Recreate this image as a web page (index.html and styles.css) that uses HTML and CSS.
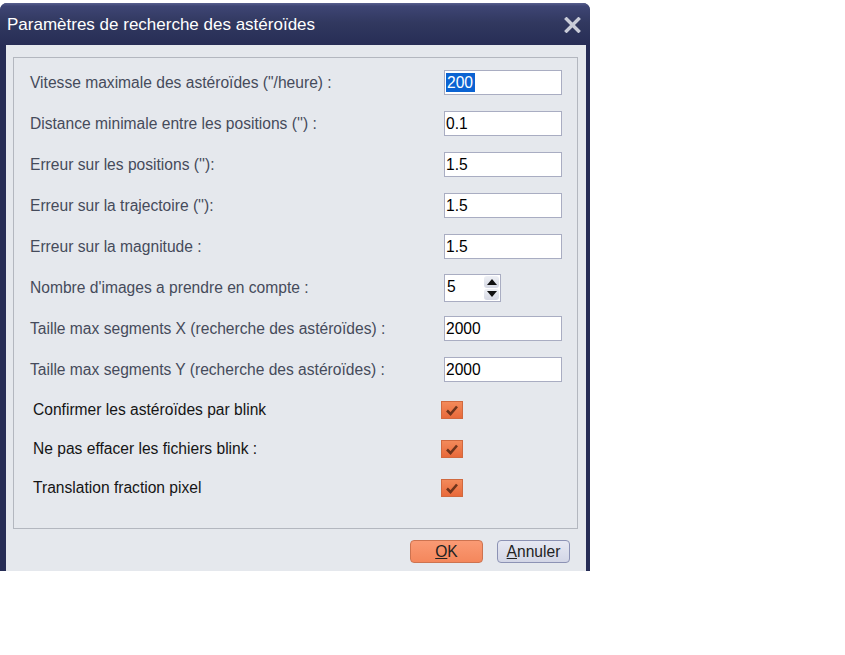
FILE: index.html
```html
<!DOCTYPE html>
<html lang="fr">
<head>
    <meta charset="UTF-8">
    <title>Paramètres de recherche des astéroïdes</title>
    <link rel="stylesheet" href="styles.css">
</head>
<body>
    <div class="window">
        <div class="titlebar">
            <span class="title">Paramètres de recherche des astéroïdes</span>
            <svg class="close" width="17" height="16" viewBox="0 0 17 16">
                <path d="M2.5 2 L14.5 14 M14.5 2 L2.5 14" stroke="#c9ccd8" stroke-width="3.4" stroke-linecap="square"/>
            </svg>
        </div>
        <div class="client">
            <div class="group">
                <div class="row">
                    <label>Vitesse maximale des astéroïdes ("/heure) :</label>
                    <div class="field"><span class="selected">200</span></div>
                </div>
                <div class="row">
                    <label>Distance minimale entre les positions ('') :</label>
                    <div class="field">0.1</div>
                </div>
                <div class="row">
                    <label>Erreur sur les positions (''):</label>
                    <div class="field">1.5</div>
                </div>
                <div class="row">
                    <label>Erreur sur la trajectoire (''):</label>
                    <div class="field">1.5</div>
                </div>
                <div class="row">
                    <label>Erreur sur la magnitude :</label>
                    <div class="field">1.5</div>
                </div>
                <div class="row">
                    <label>Nombre d'images a prendre en compte :</label>
                    <div class="spinner">
                        <span>5</span>
                        <div class="spin-btns">
                            <div class="spin-btn">
                                <svg width="12" height="8" viewBox="0 0 12 8"><path d="M1 7 L6 1 L11 7 Z" fill="#111"/></svg>
                            </div>
                            <div class="spin-btn">
                                <svg width="12" height="8" viewBox="0 0 12 8"><path d="M1 1 L6 7 L11 1 Z" fill="#111"/></svg>
                            </div>
                        </div>
                    </div>
                </div>
                <div class="row">
                    <label>Taille max segments X (recherche des astéroïdes) :</label>
                    <div class="field">2000</div>
                </div>
                <div class="row">
                    <label>Taille max segments Y (recherche des astéroïdes) :</label>
                    <div class="field">2000</div>
                </div>
                <div class="row check-row">
                    <label>Confirmer les astéroïdes par blink</label>
                    <div class="checkbox">
                        <svg width="14" height="12" viewBox="0 0 14 12"><path d="M2 6.5 L5.5 10 L12 2.5" fill="none" stroke="#6e341c" stroke-width="2.6"/></svg>
                    </div>
                </div>
                <div class="row check-row">
                    <label>Ne pas effacer les fichiers blink :</label>
                    <div class="checkbox">
                        <svg width="14" height="12" viewBox="0 0 14 12"><path d="M2 6.5 L5.5 10 L12 2.5" fill="none" stroke="#6e341c" stroke-width="2.6"/></svg>
                    </div>
                </div>
                <div class="row check-row">
                    <label>Translation fraction pixel</label>
                    <div class="checkbox">
                        <svg width="14" height="12" viewBox="0 0 14 12"><path d="M2 6.5 L5.5 10 L12 2.5" fill="none" stroke="#6e341c" stroke-width="2.6"/></svg>
                    </div>
                </div>
            </div>
            <div class="buttons">
                <button type="button" class="btn btn-ok"><u>O</u>K</button>
                <button type="button" class="btn btn-cancel"><u>A</u>nnuler</button>
            </div>
        </div>
    </div>
</body>
</html>
```
FILE: styles.css
```css
body {
    margin: 0;
    background: #fff;
    font-family: "Liberation Sans", Arial, sans-serif;
}

.window {
    width: 590px;
    height: 568px;
    margin-top: 3px;
    background: #262c55;
    border-radius: 7px 7px 0 0;
    display: flex;
    flex-direction: column;
}

.titlebar {
    height: 42px;
    display: flex;
    align-items: center;
    justify-content: space-between;
    padding: 0 9px 0 7px;
    border-radius: 7px 7px 0 0;
    background: linear-gradient(#5a6190 0px, #3e4574 3px, #31385f 20px, #272d56 42px);
}

.title {
    color: #fff;
    font-size: 17px;
    margin-top: 2px;
}

.close {
    margin-top: 1px;
}

.client {
    flex: 1;
    margin: 0 4px 0 6px;
    background: #e5e8ed;
    padding: 12px 8px 0 7px;
}

.group {
    border: 1px solid #b3b7bf;
    padding: 12px 15px 0 16px;
    box-sizing: border-box;
    height: 472px;
}

.row {
    height: 41px;
    display: flex;
    align-items: flex-start;
}

.row label {
    width: 414px;
    height: 25px;
    line-height: 25px;
    font-size: 15.6px;
    color: #454b5b;
}

.field {
    width: 118px;
    height: 25px;
    box-sizing: border-box;
    border: 1px solid #a9adc2;
    background: #fff;
    font-size: 15.6px;
    line-height: 23px;
    padding-left: 1px;
    color: #000;
}

.selected {
    background: #0b63d2;
    color: #fff;
    padding: 1px 2px 1px 1px;
}

.spinner {
    width: 57px;
    height: 28px;
    box-sizing: border-box;
    border: 1px solid #a9adc2;
    background: #fff;
    display: flex;
    justify-content: space-between;
    font-size: 15.6px;
    margin-top: -1px;
}

.spinner span {
    padding-left: 2px;
    line-height: 24px;
}

.spin-btns {
    display: flex;
    flex-direction: column;
    gap: 1px;
    padding: 1px 1px 1px 0;
}

.spin-btn {
    width: 15px;
    height: 12px;
    border-radius: 3px;
    background: linear-gradient(#eef0f5, #d6d9e4);
    display: flex;
    align-items: center;
    justify-content: center;
}

.check-row {
    height: 39px;
}

.check-row label {
    width: 408px;
    padding-left: 3px;
    height: 24px;
    line-height: 24px;
    color: #151515;
}

.checkbox {
    width: 22px;
    height: 18px;
    margin-top: 3px;
    box-sizing: border-box;
    border: 1px solid #d0693f;
    background: linear-gradient(#f38a5a, #e8693a);
    display: flex;
    align-items: center;
    justify-content: center;
}

.buttons {
    display: flex;
    justify-content: flex-end;
    gap: 14px;
    margin-top: 11px;
    padding-right: 8px;
}

.btn {
    width: 73px;
    height: 23px;
    border-radius: 4px;
    font-family: "Liberation Sans", Arial, sans-serif;
    font-size: 15.6px;
    padding: 0;
    color: #222;
}

.btn-ok {
    background: linear-gradient(#fa9a74, #f4875c);
    border: 1px solid #cd7350;
}

.btn-cancel {
    background: linear-gradient(#e6e8f2, #d3d6e6);
    border: 1px solid #8c92b4;
}
```
